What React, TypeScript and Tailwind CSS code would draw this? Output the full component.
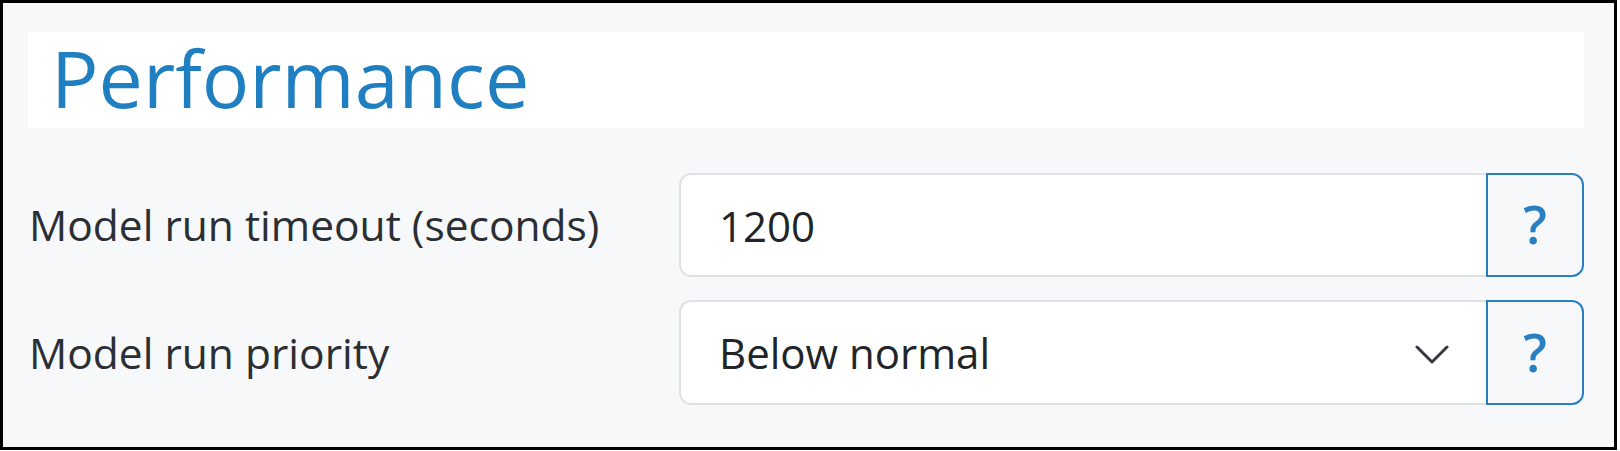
const font = { fontFamily: '"Open Sans", "Noto Sans", sans-serif' };

function HelpButton() {
  return (
    <button
      type="button"
      className="w-[98px] h-full shrink-0 flex items-center justify-center border-2 border-[#2a7fc0] rounded-r-[12px] bg-[#f7f8fa] text-[#2a7fc0] text-[52px] font-semibold leading-none pb-[2px]"
      style={font}
    >
      ?
    </button>
  );
}

export default function App() {
  return (
    <div
      className="w-[1617px] h-[450px] border-[3px] border-black bg-[#f7f8fa] pl-[25px] pt-[29px]"
      style={font}
    >
      <div className="w-[1556px] flex flex-col">
        {/* Section title */}
        <div className="h-[96px] bg-white flex items-center pl-[23px] pb-[6px]">
          <h2 className="text-[79px] leading-none text-[#1f7fc1] font-normal">
            Performance
          </h2>
        </div>

        {/* Fields */}
        <div className="mt-[45px] flex flex-col gap-[23px]">
          <div className="flex items-center h-[104px]">
            <label className="w-[651px] pl-[1px] text-[42.5px] text-[#2b2f33]">
              Model run timeout (seconds)
            </label>
            <div className="flex flex-1 h-full">
              <input
                readOnly
                defaultValue="1200"
                className="flex-1 min-w-0 h-full bg-white border-2 border-r-0 border-[#dfe2e6] rounded-l-[12px] pl-[38px] text-[42px] text-[#212529] outline-none"
                style={font}
              />
              <HelpButton />
            </div>
          </div>

          <div className="flex items-center h-[105px]">
            <label className="w-[651px] pl-[1px] text-[42.5px] text-[#2b2f33]">
              Model run priority
            </label>
            <div className="flex flex-1 h-full">
              <div className="flex-1 h-full bg-white border-2 border-r-0 border-[#dfe2e6] rounded-l-[12px] pl-[38px] pr-[37px] flex items-center justify-between">
                <span className="text-[42px] text-[#212529]">Below normal</span>
                <svg width="34" height="20" viewBox="0 0 34 20" className="mt-[4px]">
                  <polyline
                    points="2,2 17,17 32,2"
                    fill="none"
                    stroke="#343a40"
                    strokeWidth="3"
                    strokeLinecap="round"
                    strokeLinejoin="round"
                  />
                </svg>
              </div>
              <HelpButton />
            </div>
          </div>
        </div>
      </div>
    </div>
  );
}
